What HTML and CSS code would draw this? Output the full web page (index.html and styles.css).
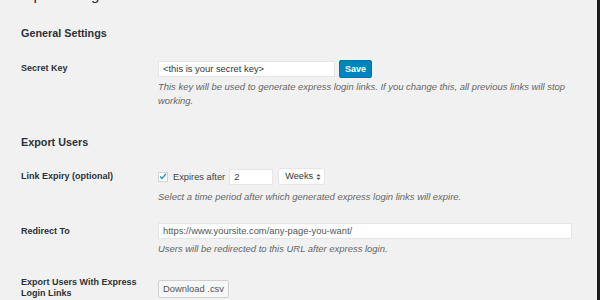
FILE: index.html
```html
<!DOCTYPE html>
<html>
<head>
<meta charset="utf-8">
<link rel="stylesheet" href="styles.css">
</head>
<body>
<div class="page">
  <h1 class="title">Express Login</h1>

  <h2 class="section">General Settings</h2>
  <div class="row row-key">
    <div class="label">Secret Key</div>
    <div class="field">
      <div class="line">
        <div class="input input-key">&lt;this is your secret key&gt;</div>
        <div class="btn-primary">Save</div>
      </div>
      <p class="desc desc-key">This key will be used to generate express login links. If you change this, all previous links will stop working.</p>
    </div>
  </div>

  <h2 class="section section-export">Export Users</h2>
  <div class="row row-expiry">
    <div class="label">Link Expiry (optional)</div>
    <div class="field">
      <div class="line">
        <span class="checkbox"><svg width="9" height="9" viewBox="0 0 9 9"><path d="M1.2 4.6 L3.4 6.8 L7.8 1.6" fill="none" stroke="#1e8cbe" stroke-width="1.5"/></svg></span>
        <span class="inline-text">Expires after</span>
        <div class="input input-num">2</div>
        <div class="select"><span>Weeks</span><svg width="5" height="8" viewBox="0 0 6 9"><path d="M0.5 3.5 L3 0.8 L5.5 3.5Z M0.5 5.5 L3 8.2 L5.5 5.5Z" fill="#555"/></svg></div>
      </div>
      <p class="desc desc-expiry">Select a time period after which generated express login links will expire.</p>
    </div>
  </div>

  <div class="row row-redirect">
    <div class="label">Redirect To</div>
    <div class="field">
      <div class="input input-url">https://www.yoursite.com/any-page-you-want/</div>
      <p class="desc desc-redirect">Users will be redirected to this URL after express login.</p>
    </div>
  </div>

  <div class="row row-download">
    <div class="label label-two">Export Users With Express Login Links</div>
    <div class="field">
      <div class="btn-secondary">Download .csv</div>
    </div>
  </div>
</div>
</body>
</html>
```

FILE: styles.css
```css
* { box-sizing: border-box; }
html, body { margin: 0; padding: 0; }
body {
  width: 600px;
  height: 300px;
  overflow: hidden;
  background: #f1f1f1;
  font-family: "Liberation Sans", Arial, sans-serif;
  color: #23282d;
}
.page {
  width: 600px;
  height: 300px;
  overflow: hidden;
  padding-left: 21px;
  border-right: 3px solid #1d1d1d;
  background: #f1f1f1;
}
.title {
  margin: -13px 0 0 -5px;
  height: 16px;
  font-size: 15px;
  font-weight: normal;
  line-height: 15px;
  color: #23282d;
}
.section {
  margin: 22px 0 0 0;
  font-size: 10.8px;
  font-weight: bold;
  line-height: 16px;
  color: #2c3338;
}
.section-export { margin-top: 26px; }
.row {
  display: grid;
  grid-template-columns: 137px 430px;
}
.row-key { margin-top: 19px; }
.row-expiry { margin-top: 18px; }
.row-redirect { margin-top: 19px; }
.row-download { margin-top: 24px; }
.label {
  font-size: 9px;
  font-weight: bold;
  line-height: 11px;
  padding-top: 3px;
  color: #2c3338;
}
.label-two { padding-top: 0; margin-top: -3px; }
.field { display: flex; flex-direction: column; }
.line { display: flex; align-items: center; }
.input {
  height: 16px;
  background: #fff;
  border: 1px solid #e6e6e6;
  font-size: 9.4px;
  line-height: 14px;
  padding: 0 4px;
  color: #32373c;
}
.input-key { width: 177px; }
.input-num { width: 44px; margin-left: 4px; }
.input-url { width: 414px; color: #555; }
.btn-primary {
  margin-left: 4px;
  height: 18px;
  width: 33px;
  border-radius: 2px;
  background: #0085ba;
  border: 1px solid #0073aa;
  color: #fff;
  font-size: 9px;
  font-weight: bold;
  line-height: 16px;
  text-align: center;
}
.desc {
  margin: 2px 0 0 0;
  font-size: 9.45px;
  font-style: italic;
  line-height: 14px;
  color: #666;
  width: 425px;
}
.desc-expiry { margin-top: 5px; }
.desc-redirect { margin-top: 3px; }
.checkbox {
  width: 10px;
  height: 10px;
  background: #fff;
  border: 1px solid #d4d4d4;
  display: flex;
  align-items: center;
  justify-content: center;
}
.inline-text {
  margin-left: 5px;
  font-size: 9.3px;
  color: #444;
}
.select {
  margin-left: 5px;
  width: 47px;
  height: 17px;
  background: #fff;
  border: 1px solid #e6e6e6;
  border-radius: 3px;
  font-size: 9.2px;
  line-height: 15px;
  padding: 0 3px 0 6px;
  color: #32373c;
  display: flex;
  align-items: center;
  justify-content: space-between;
}
.btn-secondary {
  width: 71px;
  height: 18px;
  background: #f7f7f7;
  border: 1px solid #d0d0d0;
  border-radius: 2px;
  font-size: 9.4px;
  line-height: 16px;
  text-align: center;
  color: #555;
}
```
